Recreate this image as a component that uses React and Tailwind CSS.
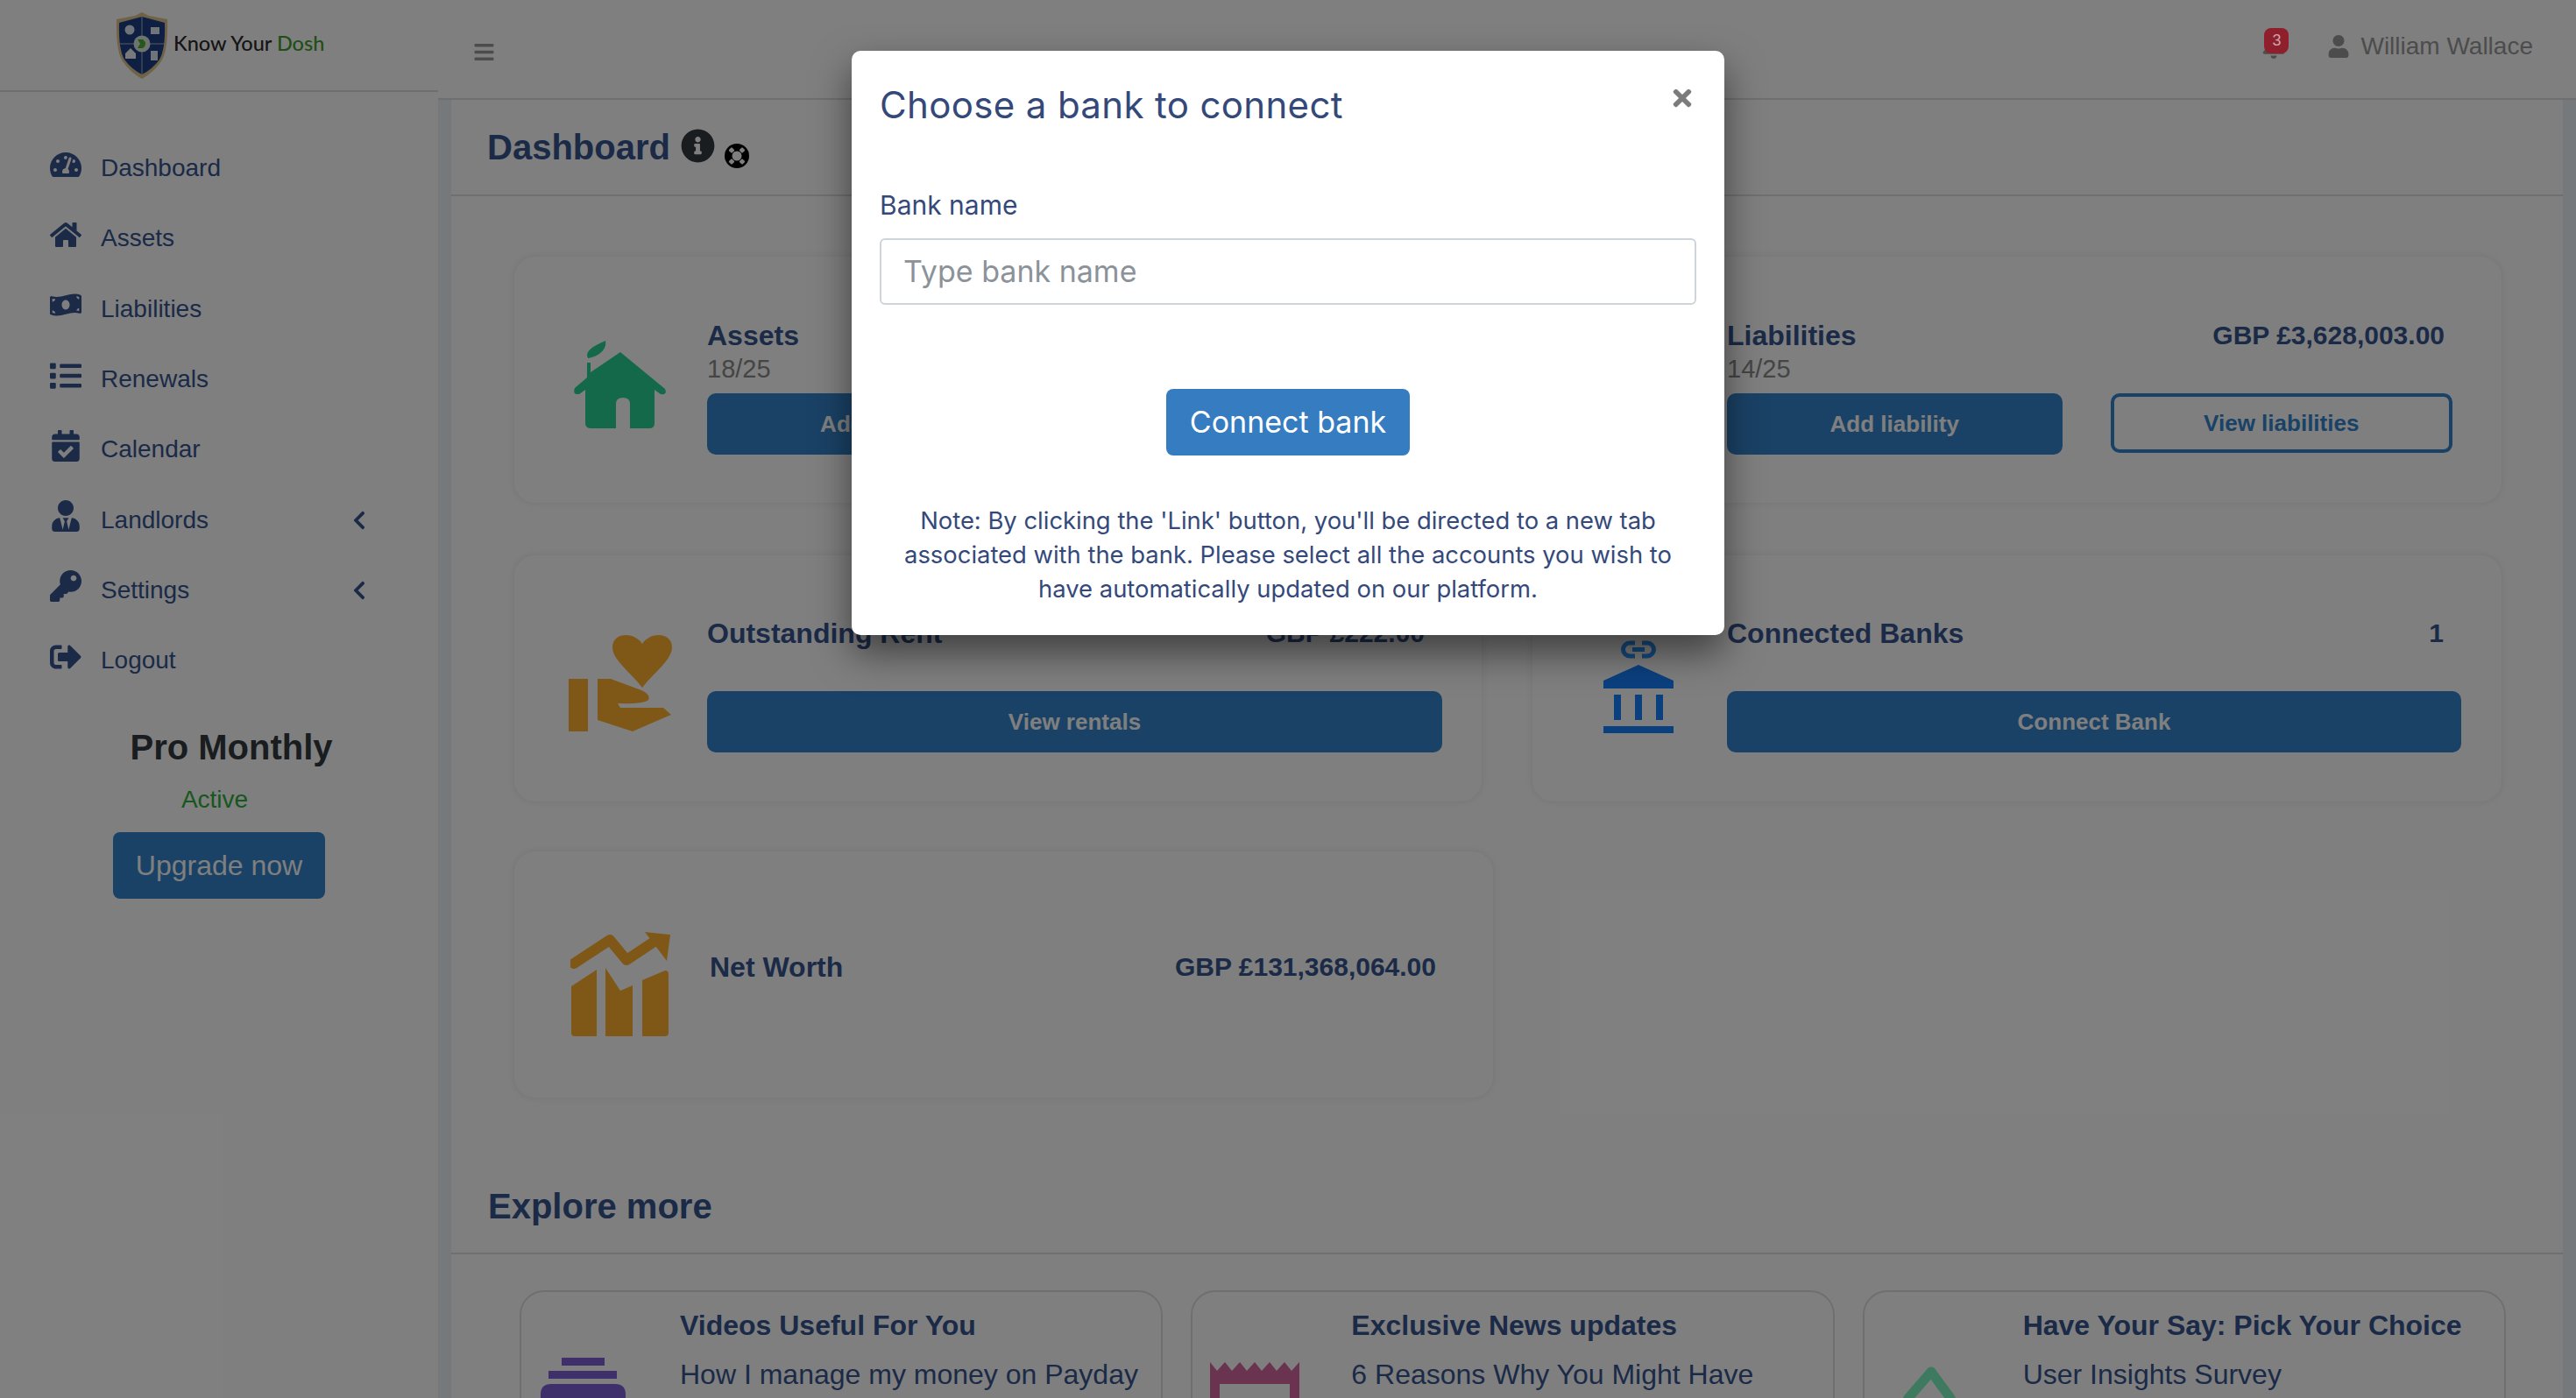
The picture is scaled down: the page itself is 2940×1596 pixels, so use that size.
import {
  FaTachometerAlt, FaHome, FaMoneyBillWave, FaList, FaCalendarCheck, FaUserTie, FaKey,
  FaSignOutAlt, FaChevronLeft, FaBars, FaBell, FaUser, FaInfoCircle, FaTimes,
} from "react-icons/fa";

const NAV = [
  { icon: FaTachometerAlt, label: "Dashboard" },
  { icon: FaHome, label: "Assets" },
  { icon: FaMoneyBillWave, label: "Liabilities" },
  { icon: FaList, label: "Renewals" },
  { icon: FaCalendarCheck, label: "Calendar" },
  { icon: FaUserTie, label: "Landlords", more: true },
  { icon: FaKey, label: "Settings", more: true },
  { icon: FaSignOutAlt, label: "Logout" },
];

const EXPLORE = [
  { title: "Videos Useful For You", text: "How I manage my money on Payday", icon: <StackIcon />, top: "pt-[75px]" },
  { title: "Exclusive News updates", text: "6 Reasons Why You Might Have", icon: <NewsIcon />, top: "pt-[80px]" },
  { title: "Have Your Say: Pick Your Choice", text: "User Insights Survey", icon: <SurveyIcon />, top: "pt-[85px] pl-[8px]" },
];

function Shield() {
  return (
    <svg viewBox="0 0 60 76" className="w-[60px] h-[76px] shrink-0">
      <path d="M30 0 L38 4 L59 8 Q60 44 52 56 Q44 68 30 76 Q16 68 8 56 Q0 44 1 8 L22 4Z" fill="#e0c58e" />
      <path d="M30 5 L56 12 Q57 42 50 54 Q42 65 30 71 Q18 65 10 54 Q3 42 4 12Z" fill="#1c3f86" />
      <path d="M30 5 V71 M4 36 H56" stroke="#a9b9c9" strokeWidth="1" />
      <circle cx="30" cy="36" r="9.5" fill="#dfe6dc" />
      <path d="M25 31 H31 Q37 36 31 41 H25 L28 36Z" fill="#4caf38" />
      <circle cx="16" cy="20" r="5.5" fill="#dfe8f2" />
      <rect x="40" y="17" width="10" height="8" fill="#dfe8f2" />
      <path d="M11 47 L17 41 L23 47 V53 H11Z" fill="#f2f2f2" />
      <rect x="40" y="44" width="8" height="11" fill="#dfe8f2" />
    </svg>
  );
}

function RingIcon() {
  return (
    <svg viewBox="0 0 28 28" className="w-[28px] h-[28px] ml-[11px] mt-[20px]">
      <circle cx="14" cy="14" r="14" fill="#000" />
      <circle cx="14" cy="14" r="5.5" fill="#fff" />
      <g fill="#fff">
        <rect x="5.5" y="5" width="5" height="5" rx="1" transform="rotate(45 8 7.5)" />
        <rect x="17.5" y="5" width="5" height="5" rx="1" transform="rotate(45 20 7.5)" />
        <rect x="5.5" y="18" width="5" height="5" rx="1" transform="rotate(45 8 20.5)" />
        <rect x="17.5" y="18" width="5" height="5" rx="1" transform="rotate(45 20 20.5)" />
      </g>
    </svg>
  );
}

function HouseIcon() {
  return (
    <svg viewBox="0 0 105 100" className="w-[105px] h-[100px]" fill="#26d294">
      <path d="M16 20 C12 12 22 6 36 0 C38 10 28 18 16 20Z" />
      <path d="M53 13 L104 55 Q107 62 99 61 L92 56 V94 Q92 100 86 100 H64 V72 Q64 65 56 65 Q48 65 48 72 V100 H20 Q13 100 13 94 V56 L6 61 Q-2 62 1 54 L15 42 V25 H19 V36Z" />
    </svg>
  );
}

function HeartHandIcon() {
  return (
    <svg viewBox="0 0 118 110" className="w-[118px] h-[110px]" fill="#ffb02e">
      <path d="M84 60 C70 42 50 28 50 14 C50 4 58 0 65 0 C74 0 81 5 84 10 C87 5 94 0 103 0 C110 0 118 4 118 14 C118 28 98 42 84 60Z" />
      <rect x="0" y="50" width="22" height="60" />
      <path d="M33 50 H48 L83 63 Q94 68 91 74 Q86 79 56 78 L59 83 H108 L117 91 L73 110 L33 97Z" />
    </svg>
  );
}

function NetWorthIcon() {
  return (
    <svg viewBox="0 0 114 119" className="w-[114px] h-[119px]" fill="#ffb02e">
      <path d="M4 36 L45 9 L64 32 L100 8" fill="none" stroke="#ffb02e" strokeWidth="12" strokeLinecap="round" strokeLinejoin="round" />
      <path d="M85 0 L114 3 L110 33Z" />
      <path d="M1 62 L30 43 V119 H5 Q1 119 1 115Z" />
      <path d="M40 41 L57 67 L71 61 V119 H40Z" />
      <path d="M82 55 L108 44 Q112 44 112 48 V115 Q112 119 108 119 H82Z" />
    </svg>
  );
}

function BankIcon() {
  return (
    <svg viewBox="0 0 80 106" className="w-[80px] h-[106px]" fill="#1680ff">
      <path d="M36 3 H30 a7.5 7.5 0 0 0 0 15 H36 M44 3 H50 a7.5 7.5 0 0 1 0 15 H44 M33 10.5 H47" fill="none" stroke="#2c94ff" strokeWidth="5" />
      <path d="M40 28 L80 46 V55 H0 V46Z" />
      <rect x="12" y="62" width="8" height="29" />
      <rect x="36" y="62" width="8" height="29" />
      <rect x="60" y="62" width="8" height="29" />
      <rect x="0" y="98" width="80" height="8" />
    </svg>
  );
}

function StackIcon() {
  return (
    <svg viewBox="0 0 97 60" className="w-[97px] h-[60px]" fill="#7e5fd6">
      <rect x="24" y="0" width="49" height="9" />
      <rect x="9" y="15" width="78" height="9" />
      <path d="M0 42 Q0 30 12 30 H85 Q97 30 97 42 V60 H0Z" />
    </svg>
  );
}

function NewsIcon() {
  return (
    <svg viewBox="0 0 102 60" className="w-[102px] h-[60px]" fill="#d466a0">
      <path d="M0 0 L8 10 L17 0 L25 10 L34 0 L42 10 L51 0 L59 10 L68 0 L76 10 L85 0 L93 10 L102 0 V60 H91 V25 H11 V60 H0Z" />
    </svg>
  );
}

function SurveyIcon() {
  return (
    <svg viewBox="0 0 62 50" className="w-[62px] h-[50px]">
      <path d="M33 6 L55 36 Q58 42 55 48 L32 80 L6 48 Q4 42 7 36Z" fill="none" stroke="#7af4c0" strokeWidth="11" strokeLinejoin="round" />
    </svg>
  );
}

function PrimaryBtn({ className, children }) {
  return (
    <button className={`h-[70px] rounded-[10px] bg-[#3484cc] text-white font-bold text-[26px] ${className}`}>
      {children}
    </button>
  );
}

function OutlineBtn({ className, children }) {
  return (
    <button className={`h-[68px] rounded-[10px] border-[4px] border-[#3484cc] text-[#3484cc] font-bold text-[26px] ${className}`}>
      {children}
    </button>
  );
}

function StatCard({ icon, iconCol = "w-[220px] pl-[20px]", iconTop, className = "", children }) {
  return (
    <div className={`flex items-start bg-white rounded-[24px] shadow-[0_0_10px_rgba(0,0,0,0.1)] ${className}`}>
      <div className={`flex justify-center shrink-0 ${iconCol} ${iconTop}`}>{icon}</div>
      <div className="flex-1 min-w-0">{children}</div>
    </div>
  );
}

function TitleRow({ title, value, className = "" }) {
  return (
    <div className={`flex justify-between font-bold text-[#36558f] leading-[36px] ${className}`}>
      <span className="text-[32px]">{title}</span>
      <span className="text-[30px]">{value}</span>
    </div>
  );
}

function Sidebar() {
  return (
    <aside className="w-[500px] shrink-0 flex flex-col">
      <div className="h-[105px] border-b-2 border-[#dedede] flex items-center pl-[132px] gap-[6px]">
        <Shield />
        <span className="font-['Lato'] text-[23.5px] font-medium text-[#2a2a2a] whitespace-nowrap -mt-[4px]">
          Know Your <span className="text-[#3f9e2c]">Dosh</span>
        </span>
      </div>
      <nav className="pt-[47px] pl-[53px] pr-[78px]">
        {NAV.map((n) => (
          <div key={n.label} className="h-[80.3px] flex items-center text-[#36558f]">
            <div className="w-[44px] flex justify-center -mt-[9px]"><n.icon size={36} /></div>
            <span className="ml-[18px] text-[28px] flex-1">{n.label}</span>
            {n.more && <FaChevronLeft size={24} />}
          </div>
        ))}
      </nav>
      <div className="flex flex-col items-center mt-[35px]">
        <h3 className="pl-[28px] font-bold text-[40px] leading-[48px] text-[#343a40]">Pro Monthly</h3>
        <p className="mt-[18px] -ml-[10px] text-[28px] leading-[36px] text-[#2fae3c]">Active</p>
        <button className="mt-[19px] w-[242px] h-[76px] rounded-[8px] bg-[#3484cc] text-white text-[32px]">Upgrade now</button>
      </div>
    </aside>
  );
}

function TopBar() {
  return (
    <header className="h-[114px] shrink-0 border-b-2 border-[#dedede] flex items-start justify-between pl-[40px] pr-[49px] text-[#999999]">
      <FaBars size={25} className="mt-[47px]" />
      <div className="flex items-center mt-[34px] h-[38px]">
        {/* bell sits above the backdrop in the shot, so its colours are the dimmed ones */}
        <div className="relative mr-[47px] z-20">
          <FaBell size={28} className="text-[#4d4d4d]" />
          <span className="absolute -top-[7px] left-[3px] w-[28px] h-[29px] rounded-[8px] bg-[#8f1f2c] text-[#c9a4a8] text-[18px] leading-[29px] text-center">3</span>
        </div>
        <FaUser size={26} className="mr-[12px]" />
        <span className="text-[28px]">William Wallace</span>
      </div>
    </header>
  );
}

function Content() {
  return (
    <div className="flex-1 mx-[15px] bg-white">
      <div className="h-[110px] border-b-2 border-[#dedede] pl-[41px] flex items-center">
        <h1 className="font-bold text-[40px] text-[#36558f]">Dashboard</h1>
        <FaInfoCircle size={39} className="ml-[12px] -mt-[4px] text-[#343a40]" />
        <RingIcon />
      </div>

      <div className="pt-[69px] pl-[72px] grid grid-cols-[1104px_1106px] gap-x-[58px] gap-y-[60px]">
        <StatCard icon={<HouseIcon />} iconTop="pt-[96px]" className="h-[281px]">
          <div className="pt-[72px] pr-[56px]">
            <TitleRow title="Assets" value="GBP £134,996,067.00" className="pr-[9px]" />
            <p className="text-[29px] leading-[36px] text-[#8a8a8a] mt-[2px]">18/25</p>
            <div className="flex gap-[55px] mt-[10px]">
              <PrimaryBtn className="flex-1">Add asset</PrimaryBtn>
              <OutlineBtn className="flex-1">View assets</OutlineBtn>
            </div>
          </div>
        </StatCard>
        <StatCard iconCol="w-[222px]" icon={<span className="contents" />} iconTop="pt-[96px]" className="h-[281px]">
          <div className="pt-[72px] pr-[56px]">
            <TitleRow title="Liabilities" value="GBP £3,628,003.00" className="pr-[9px]" />
            <p className="text-[29px] leading-[36px] text-[#8a8a8a] mt-[2px]">14/25</p>
            <div className="flex gap-[55px] mt-[10px]">
              <PrimaryBtn className="flex-1">Add liability</PrimaryBtn>
              <OutlineBtn className="flex-1">View liabilities</OutlineBtn>
            </div>
          </div>
        </StatCard>

        <StatCard iconCol="w-[220px] pl-[22px]" icon={<HeartHandIcon />} iconTop="pt-[91px]" className="h-[281px]">
          <div className="pt-[71px] pr-[45px]">
            <TitleRow title="Outstanding Rent" value="GBP £222.00" className="pr-[20px]" />
            <PrimaryBtn className="w-full mt-[48px]">View rentals</PrimaryBtn>
          </div>
        </StatCard>
        <StatCard iconCol="w-[222px] pl-[20px]" icon={<BankIcon />} iconTop="pt-[97px]" className="h-[281px]">
          <div className="pt-[71px] pr-[46px]">
            <TitleRow title="Connected Banks" value="1" className="pr-[20px]" />
            <PrimaryBtn className="w-full mt-[48px]">Connect Bank</PrimaryBtn>
          </div>
        </StatCard>

        <StatCard iconCol="w-[220px] pl-[22px]" icon={<NetWorthIcon />} iconTop="pt-[92px]" className="-mt-[3px] h-[281px] w-[1117px]">
          <div className="pt-[114px] pl-[3px] pr-[65px]">
            <TitleRow title="Net Worth" value="GBP £131,368,064.00" />
          </div>
        </StatCard>
      </div>

      <div className="mt-[94px] h-[85px] border-b-2 border-[#dedede] pl-[42px]">
        <h2 className="font-bold text-[40px] leading-[60px] text-[#36558f]">Explore more</h2>
      </div>

      <div className="pt-[41px] pl-[78px] pr-[65px] grid grid-cols-3 gap-[32px]">
        {EXPLORE.map((e) => (
          <div key={e.title} className="h-[280px] flex rounded-[28px] border-2 border-[#dedede] overflow-hidden">
            <div className={`w-[181px] shrink-0 flex justify-center pr-[40px] ${e.top}`}>{e.icon}</div>
            <div className="pt-[16px] text-[#36558f] whitespace-nowrap">
              <h4 className="font-bold text-[32px] leading-[44px]">{e.title}</h4>
              <p className="mt-[12px] text-[32px] leading-[44px]">{e.text}</p>
            </div>
          </div>
        ))}
      </div>
    </div>
  );
}

function BankModal() {
  return (
    <div className="absolute z-30 left-[972px] top-[58px] w-[996px] h-[667px] bg-white rounded-[10px] shadow-[0_20px_44px_rgba(0,0,0,0.5)] px-[32px] pt-[32px] font-['Inter'] text-[#34497a]">
      <div className="flex justify-between items-start">
        <h2 className="text-[42px] leading-[60px] tracking-[0.35px]">Choose a bank to connect</h2>
        <FaTimes size={30} className="text-[#7c7c7c] mt-[7px] mr-[1px]" />
      </div>
      <label className="block mt-[62px] text-[30px] leading-[44px]">Bank name</label>
      <input
        placeholder="Type bank name"
        className="mt-[16px] w-full h-[76px] px-[25px] pb-[2px] rounded-[6px] border-2 border-[#ced4da] text-[34px] placeholder:text-[#8b9299] outline-none"
      />
      <div className="flex justify-center mt-[96px]">
        <button className="w-[278px] h-[76px] pb-[2px] rounded-[8px] bg-[#367cc0] text-white text-[34px]">Connect bank</button>
      </div>
      <p className="mt-[55px] text-center text-[27.4px] leading-[39px]">
        Note: By clicking the 'Link' button, you'll be directed to a new tab<br />
        associated with the bank. Please select all the accounts you wish to<br />
        have automatically updated on our platform.
      </p>
    </div>
  );
}

export default function App() {
  return (
    <div className="relative h-screen overflow-hidden flex bg-white font-['Liberation_Sans',Arial,sans-serif]">
      <Sidebar />
      <main className="flex-1 min-w-0 flex flex-col bg-[#ecf2f8]">
        <div className="bg-white"><TopBar /></div>
        <Content />
      </main>
      <div className="absolute inset-0 z-10 bg-black/50" />
      <BankModal />
    </div>
  );
}
